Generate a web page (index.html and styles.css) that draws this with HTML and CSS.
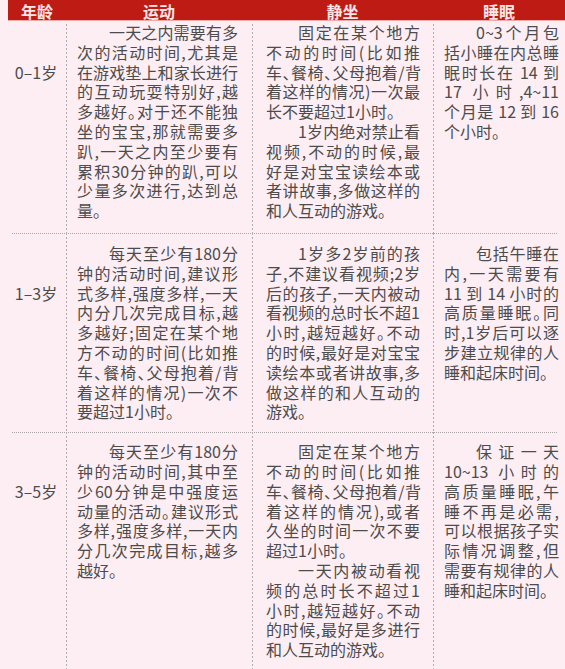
FILE: index.html
```html
<!DOCTYPE html>
<html lang="zh-CN">
<head>
<meta charset="utf-8">
<title>各年龄段活动、静坐与睡眠建议</title>
<link rel="stylesheet" href="styles.css">
</head>
<body>
<div class="sheet">
  <div class="head">
    <div>年龄</div><div>运动</div><div>静坐</div><div>睡眠</div>
  </div>

  <div class="row r1">
    <div class="age">0–1岁</div>
    <div class="cell c2">
      <p>
        <span class="ln ind">一天之内需要有多</span>
        <span class="ln">次的活动时间,尤其是</span>
        <span class="ln">在游戏垫上和家长进行</span>
        <span class="ln">的互动玩耍特别好,越</span>
        <span class="ln">多越好。对于还不能独</span>
        <span class="ln">坐的宝宝,那就需要多</span>
        <span class="ln">趴,一天之内至少要有</span>
        <span class="ln">累积30分钟的趴,可以</span>
        <span class="ln">少量多次进行,达到总</span>
        <span class="ln end">量。</span>
      </p>
    </div>
    <div class="cell c3">
      <p>
        <span class="ln ind">固定在某个地方</span>
        <span class="ln">不动的时间(比如推</span>
        <span class="ln tight">车、餐椅、父母抱着/背</span>
        <span class="ln">着这样的情况)一次最</span>
        <span class="ln end">长不要超过1小时。</span>
      </p>
      <p>
        <span class="ln ind">1岁内绝对禁止看</span>
        <span class="ln">视频,不动的时候,最</span>
        <span class="ln">好是对宝宝读绘本或</span>
        <span class="ln">者讲故事,多做这样的</span>
        <span class="ln end">和人互动的游戏。</span>
      </p>
    </div>
    <div class="cell c4">
      <p>
        <span class="ln ind">0~3个月包</span>
        <span class="ln">括小睡在内总睡</span>
        <span class="ln">眠时长在 14 到</span>
        <span class="ln">17 小时,4~11</span>
        <span class="ln">个月是 12 到 16</span>
        <span class="ln end">个小时。</span>
      </p>
    </div>
  </div>

  <div class="row r2">
    <div class="age">1–3岁</div>
    <div class="cell c2">
      <p>
        <span class="ln ind">每天至少有180分</span>
        <span class="ln">钟的活动时间,建议形</span>
        <span class="ln">式多样,强度多样,一天</span>
        <span class="ln">内分几次完成目标,越</span>
        <span class="ln">多越好;固定在某个地</span>
        <span class="ln">方不动的时间(比如推</span>
        <span class="ln tight-s">车、餐椅、父母抱着/背</span>
        <span class="ln">着这样的情况)一次不</span>
        <span class="ln end">要超过1小时。</span>
      </p>
    </div>
    <div class="cell c3">
      <p>
        <span class="ln ind">1岁多2岁前的孩</span>
        <span class="ln">子,不建议看视频;2岁</span>
        <span class="ln">后的孩子,一天内被动</span>
        <span class="ln">看视频的总时长不超1</span>
        <span class="ln">小时,越短越好。不动</span>
        <span class="ln">的时候,最好是对宝宝</span>
        <span class="ln">读绘本或者讲故事,多</span>
        <span class="ln">做这样的和人互动的</span>
        <span class="ln end">游戏。</span>
      </p>
    </div>
    <div class="cell c4">
      <p>
        <span class="ln ind">包括午睡在</span>
        <span class="ln">内,一天需要有</span>
        <span class="ln">11 到 14 小时的</span>
        <span class="ln">高质量睡眠。同</span>
        <span class="ln">时,1岁后可以逐</span>
        <span class="ln">步建立规律的人</span>
        <span class="ln end">睡和起床时间。</span>
      </p>
    </div>
  </div>

  <div class="row r3">
    <div class="age">3–5岁</div>
    <div class="cell c2">
      <p>
        <span class="ln ind">每天至少有180分</span>
        <span class="ln">钟的活动时间,其中至</span>
        <span class="ln">少60分钟是中强度运</span>
        <span class="ln">动量的活动。建议形式</span>
        <span class="ln">多样,强度多样,一天内</span>
        <span class="ln">分几次完成目标,越多</span>
        <span class="ln end">越好。</span>
      </p>
    </div>
    <div class="cell c3">
      <p>
        <span class="ln ind">固定在某个地方</span>
        <span class="ln">不动的时间(比如推</span>
        <span class="ln tight">车、餐椅、父母抱着/背</span>
        <span class="ln">着这样的情况),或者</span>
        <span class="ln">久坐的时间一次不要</span>
        <span class="ln end">超过1小时。</span>
      </p>
      <p>
        <span class="ln ind">一天内被动看视</span>
        <span class="ln">频的总时长不超过1</span>
        <span class="ln">小时,越短越好。不动</span>
        <span class="ln">的时候,最好是多进行</span>
        <span class="ln end">和人互动的游戏。</span>
      </p>
    </div>
    <div class="cell c4">
      <p>
        <span class="ln ind">保证一天</span>
        <span class="ln">10~13 小时的</span>
        <span class="ln">高质量睡眠,午</span>
        <span class="ln">睡不再是必需,</span>
        <span class="ln">可以根据孩子实</span>
        <span class="ln">际情况调整,但</span>
        <span class="ln">需要有规律的人</span>
        <span class="ln end">睡和起床时间。</span>
      </p>
    </div>
  </div>
</div>
</body>
</html>
```

FILE: styles.css
```css
html, body {
  margin: 0;
  padding: 0;
}

body {
  background: #fdeef4;
  font-family: "Noto Sans CJK SC", "Noto Sans", sans-serif;
  color: #4c4c4c;
  font-size: 16px;
  height: 669px;
  overflow: hidden;
}

.sheet {
  margin-left: 8px;
  width: 557px;
}

.head {
  display: grid;
  grid-template-columns: 58px 186px 181px 132px;
  height: 20px;
  background: #bd1b14;
  border-bottom: 1px solid #efaaa8;
  color: #fde6e6;
  font-weight: 700;
  font-size: 16px;
  text-align: center;
}

.head div {
  height: 20px;
  line-height: 22px;
  margin-top: -1px;
  padding-top: 1px;
  box-sizing: border-box;
}

.row {
  display: grid;
  grid-template-columns: 58px 186px 181px 132px;
  background-image: repeating-linear-gradient(to right, #a9a4a6 0 1px, transparent 1px 2px);
  background-size: 546px 1px;
  background-position: 4px 0;
  background-repeat: no-repeat;
}

.r1 {
  background-image: none;
  padding: 2px 0 12px;
}

.r2 {
  padding: 11px 0 10px;
}

.r3 {
  padding: 10px 0 40px;
}

.age {
  line-height: 19.8px;
  padding-top: 39.6px;
  padding-right: 2px;
  text-align: center;
  white-space: nowrap;
}

.cell {
  margin: -11px 0 -10px;
  padding: 11px 0 10px;
  background-image: repeating-linear-gradient(to bottom, #b3acaf 0 2px, transparent 2px 4px);
  background-size: 1px 100%;
  background-repeat: no-repeat;
  background-position: 0 0;
}

.r1 .cell {
  margin: -2px 0 -12px;
  padding: 2px 0 12px;
  background-position: 0 3px;
}

.r3 .cell {
  margin: -10px 0 -40px;
  padding: 10px 0 40px;
}

.c2 {
  padding-left: 11px !important;
  padding-right: 14px !important;
}

.c3 {
  padding-left: 14px !important;
  padding-right: 13px !important;
}

.c4 {
  padding-left: 11px !important;
  padding-right: 6px !important;
}

.cell p {
  margin: 0;
  font-feature-settings: "halt";
}

.ln {
  display: block;
  line-height: 19.8px;
  white-space: nowrap;
  text-align: justify;
  text-align-last: justify;
}

.ln.ind {
  padding-left: 2em;
}

.ln.end {
  text-align-last: left;
}

.ln.tight {
  letter-spacing: -1.1px;
}

.ln.tight-s {
  letter-spacing: -0.5px;
}
```
